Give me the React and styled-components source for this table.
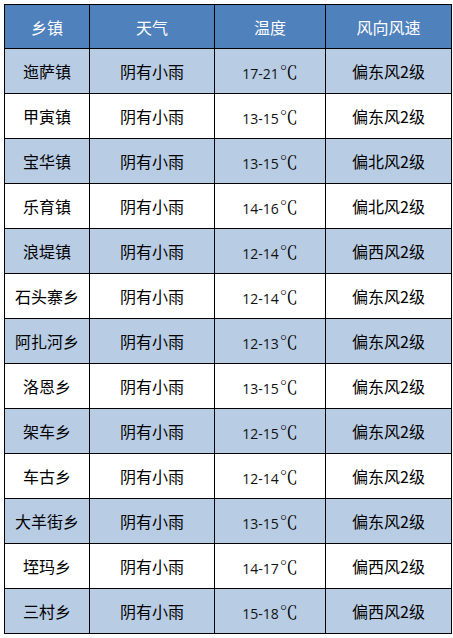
import React from 'react'
import styled, { createGlobalStyle } from 'styled-components'

const GlobalStyle = createGlobalStyle`
  body {
    margin: 0;
    background: #ffffff;
    font-family: "Noto Sans CJK SC", "Liberation Sans", sans-serif;
  }
`

const Page = styled.div`
  padding: 4px;
`

const Table = styled.table`
  border-collapse: collapse;
  table-layout: fixed;
  width: 447px;
  border: 1px solid #000;
`

const HeadRow = styled.tr`
  height: 44px;
  background: #4f81bd;
`

const Row = styled.tr`
  height: 45px;
  background: ${(p) => (p.$shaded ? '#b8cce4' : '#ffffff')};
`

const HeadCell = styled.th`
  border: 1px solid #000;
  padding: 0;
  color: #ffffff;
  font-weight: normal;
  font-size: 16px;
  text-align: center;
  vertical-align: middle;
`

const Cell = styled.td`
  border: 1px solid #000;
  padding: 0;
  color: #000;
  font-size: 16px;
  text-align: center;
  vertical-align: middle;
  white-space: nowrap;
`

const Temp = styled.span`
  font-family: "Open Sans", "Liberation Sans", sans-serif;
  font-size: 14px;
  color: #111;
`

const Degree = styled.span`
  font-family: "Noto Serif CJK SC", "DejaVu Serif", "Liberation Serif", "Noto Sans CJK SC", serif;
  font-size: 18px;
  margin-left: 1px;
`

const rows = [
  ['迤萨镇', '17-21', '偏东风2级'],
  ['甲寅镇', '13-15', '偏东风2级'],
  ['宝华镇', '13-15', '偏北风2级'],
  ['乐育镇', '14-16', '偏北风2级'],
  ['浪堤镇', '12-14', '偏西风2级'],
  ['石头寨乡', '12-14', '偏东风2级'],
  ['阿扎河乡', '12-13', '偏东风2级'],
  ['洛恩乡', '13-15', '偏东风2级'],
  ['架车乡', '12-15', '偏东风2级'],
  ['车古乡', '12-14', '偏东风2级'],
  ['大羊街乡', '13-15', '偏东风2级'],
  ['垤玛乡', '14-17', '偏西风2级'],
  ['三村乡', '15-18', '偏西风2级'],
]

export default function App() {
  return (
    <Page>
      <GlobalStyle />
      <Table>
        <colgroup>
          <col style={{ width: 85 }} />
          <col style={{ width: 125 }} />
          <col style={{ width: 111 }} />
          <col style={{ width: 126 }} />
        </colgroup>
        <thead>
          <HeadRow>
            <HeadCell>乡镇</HeadCell>
            <HeadCell>天气</HeadCell>
            <HeadCell>温度</HeadCell>
            <HeadCell>风向风速</HeadCell>
          </HeadRow>
        </thead>
        <tbody>
          {rows.map(([town, temp, wind], i) => (
            <Row key={town} $shaded={i % 2 === 0}>
              <Cell>{town}</Cell>
              <Cell>阴有小雨</Cell>
              <Cell>
                <Temp>{temp}</Temp>
                <Degree>℃</Degree>
              </Cell>
              <Cell>{wind}</Cell>
            </Row>
          ))}
        </tbody>
      </Table>
    </Page>
  )
}
